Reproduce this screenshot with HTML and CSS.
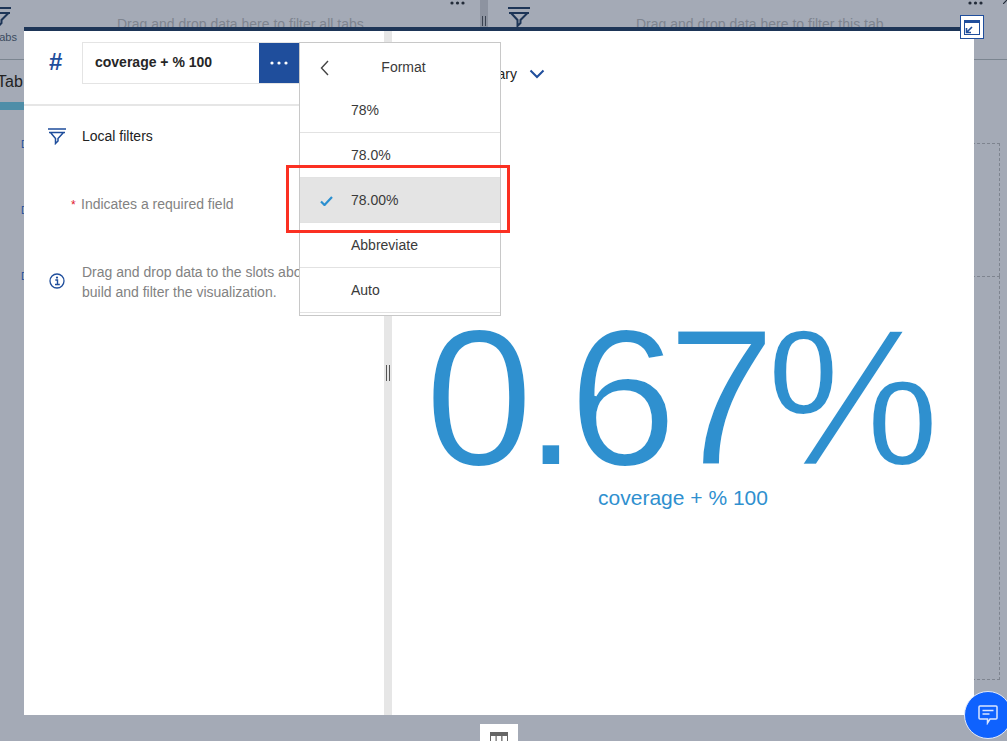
FILE: index.html
```html
<!DOCTYPE html>
<html lang="en">
<head>
    <meta charset="UTF-8">
    <meta name="viewport" content="width=device-width, initial-scale=1.0">
    <title>Visualization format</title>
    <link rel="stylesheet" href="styles.css">
</head>
<body>
    <!-- Dashboard behind the overlay -->
    <div class="board">
        <div class="board-left">
            <div class="all-tabs">
                <div class="tabs-side">
                    <svg class="funnel funnel-dark" viewBox="0 0 22 20"><path d="M0 1h22M1 6h20M3 6l6.500 7v6l3-3v-3l7-7" fill="none" stroke="#1d3557" stroke-width="2"/></svg>
                    <span class="tabs-label">abs</span>
                </div>
                <div class="drop-hint hint-all">Drag and drop data here to filter all tabs.</div>
                <svg class="dots" viewBox="0 0 15 4"><circle cx="2" cy="2" r="1.600"/><circle cx="7.500" cy="2" r="1.600"/><circle cx="13" cy="2" r="1.600"/></svg>
            </div>
            <div class="tab-title">Tab</div>
            <div class="tab-bar"></div>
            <div class="tab-marks">
                <span>D</span>
                <span>D</span>
                <span>D</span>
            </div>
        </div>
        <div class="board-split"><span class="grip"></span></div>
        <div class="board-right">
            <div class="this-tab">
                <svg class="funnel funnel-dark" viewBox="0 0 22 20"><path d="M0 1h22M1 6h20M3 6l6.500 7v6l3-3v-3l7-7" fill="none" stroke="#1d3557" stroke-width="2"/></svg>
                <div class="drop-hint hint-this">Drag and drop data here to filter this tab.</div>
                <svg class="dots" viewBox="0 0 15 4"><circle cx="2" cy="2" r="1.600"/><circle cx="7.500" cy="2" r="1.600"/><circle cx="13" cy="2" r="1.600"/></svg>
                <svg class="corner-mark" viewBox="0 0 4 4"><path d="M0 4l4-4" stroke="#222b38" stroke-width="1.200"/></svg>
            </div>
            <div class="slot slot-top"></div>
            <div class="slot slot-bottom"></div>
        </div>
    </div>

    <!-- Focused visualization -->
    <div class="modal">
        <div class="panel">
            <div class="slot-row">
                <span class="hash">#</span>
                <div class="field">
                    <span class="field-name">coverage + % 100</span>
                    <button class="field-more" type="button">
                        <svg viewBox="0 0 18 4"><circle cx="2" cy="2" r="1.600"/><circle cx="9" cy="2" r="1.600"/><circle cx="16" cy="2" r="1.600"/></svg>
                    </button>
                </div>
            </div>
            <div class="filter-row">
                <svg class="funnel funnel-blue" viewBox="0 0 18 17"><path d="M0 1h18M1 4.500h16M2.500 4.500l5 6v5l2.500-2.500v-2.500l5.500-6" fill="none" stroke="#1f4e9c" stroke-width="1.500"/></svg>
                <span>Local filters</span>
            </div>
            <div class="required"><i>*</i>Indicates a required field</div>
            <div class="info">
                <svg class="info-icon" viewBox="0 0 16 16"><circle cx="8" cy="8" r="7" fill="none" stroke="#1f4e9c" stroke-width="1.300"/><path d="M6.300 7h2.200v4.500M6 11.500h4.800" fill="none" stroke="#1f4e9c" stroke-width="1.400"/><circle cx="8" cy="4.600" r="1.100" fill="#1f4e9c"/></svg>
                <p>Drag and drop data to the slots above to build and filter the visualization.</p>
            </div>
        </div>
        <div class="splitter"><span class="grip grip-light"></span></div>
        <div class="viz">
            <div class="viz-title">
                <span>Summary</span>
                <svg class="chevron" viewBox="0 0 16 10"><path d="M1.500 1.500L8 8l6.500-6.500" fill="none" stroke="#1f4e9c" stroke-width="2"/></svg>
            </div>
            <div class="summary">
                <div class="big-value">0.67%</div>
                <div class="big-label">coverage + % 100</div>
            </div>
        </div>
    </div>

    <!-- Format menu -->
    <div class="menu">
        <div class="menu-head">
            <svg class="back" viewBox="0 0 9 16"><path d="M8 1L1.500 8 8 15" fill="none" stroke="#444" stroke-width="1.400"/></svg>
            <span>Format</span>
        </div>
        <div class="menu-item">78%</div>
        <div class="menu-item">78.0%</div>
        <div class="menu-item selected">
            <svg class="check" viewBox="0 0 13 10"><path d="M1 5.500l3.500 3.500 7.500-8" fill="none" stroke="#2a8fd0" stroke-width="2.200"/></svg>
            78.00%
        </div>
        <div class="menu-item">Abbreviate</div>
        <div class="menu-item">Auto</div>
    </div>

    <div class="highlight"></div>

    <button class="restore" type="button">
        <svg viewBox="0 0 16 15"><rect x=".5" y=".5" width="15" height="14" fill="#fff" stroke="#1f4e9c"/><rect width="16" height="3" fill="#1f4e9c"/><path d="M2.500 12.500L8 7M2.500 8v4.500H7" fill="none" stroke="#1f4e9c" stroke-width="1.600"/></svg>
    </button>

    <div class="table-tab">
        <svg viewBox="0 0 18 12"><rect width="18" height="12" fill="#666"/><rect x="1" y="4" width="4.500" height="5" fill="#fff"/><rect x="6.700" y="4" width="4.500" height="5" fill="#fff"/><rect x="12.500" y="4" width="4.500" height="5" fill="#fff"/></svg>
    </div>

    <button class="chat" type="button">
        <svg viewBox="0 0 20 20"><path d="M2 1h16a1 1 0 0 1 1 1v11a1 1 0 0 1-1 1h-6l-2.500 4v-4h-7.500a1 1 0 0 1-1-1v-11a1 1 0 0 1 1-1z" fill="none" stroke="#dbe6ff" stroke-width="1.500"/><path d="M4.500 5.500h11M4.500 9h7" fill="none" stroke="#dbe6ff" stroke-width="1.500"/></svg>
    </button>
</body>
</html>
```

FILE: styles.css
```css
/* Basic Styles */
html, body {
    height: 100%;
}
body {
    margin: 0;
    overflow: hidden;
    font-family: "Liberation Sans", Arial, sans-serif;
    background: #a4aab6;
    color: #222;
}
button {
    border: none;
    padding: 0;
    font-family: inherit;
    cursor: pointer;
}
svg {
    display: block;
}

/* Board behind the modal */
.board {
    display: flex;
    height: 741px;
    overflow: hidden;
}
.board-left {
    width: 480px;
    flex: none;
}
.all-tabs {
    display: flex;
    height: 60px;
    box-sizing: border-box;
    border-bottom: 1px solid #7b8590;
}
.tabs-side {
    width: 24px;
    margin-left: -11px;
    padding-top: 7px;
}
.funnel-dark {
    width: 22px;
    height: 20px;
    flex: none;
}
.tabs-label {
    display: block;
    margin-top: 4px;
    font-size: 11px;
    color: #3b4a60;
    text-align: right;
    margin-right: -4px;
}
.drop-hint {
    font-size: 14px;
    color: #7e848f;
    line-height: 16px;
}
.hint-all {
    margin: 16px 0 0 104px;
}
.dots {
    width: 15px;
    height: 4px;
    flex: none;
    margin: 1px 15px 0 auto;
    fill: #222b38;
}
.tab-title {
    height: 42px;
    line-height: 43px;
    font-size: 16px;
    margin-left: -3px;
}
.tab-bar {
    height: 8px;
    background: #4f8ea8;
}
.tab-marks {
    display: flex;
    flex-direction: column;
    gap: 50px;
    margin: 27px 0 0 21px;
    font-size: 10px;
    line-height: 16px;
    color: #1f4e9c;
}
.board-split {
    width: 8px;
    flex: none;
    background: #8d93a0;
    display: flex;
    justify-content: center;
    padding-top: 16px;
    height: 11px;
}
.grip {
    width: 2px;
    height: 10px;
    border: solid #3a4250;
    border-width: 0 1px;
}
.board-right {
    flex: 1;
}
.this-tab {
    display: flex;
    height: 60px;
    box-sizing: border-box;
    padding: 7px 0 0 20px;
    border-bottom: 1px solid #7b8590;
}
.hint-this {
    margin: 9px 0 0 106px;
}
.this-tab .dots {
    margin: -6px 20px 0 auto;
}
.corner-mark {
    width: 4px;
    height: 4px;
    flex: none;
    margin-top: -7px;
}
.slot {
    width: 511px;
    border: dashed #7e848f;
    border-width: 1px 1px 0 0;
}
.slot-top {
    height: 132px;
    margin-top: 83px;
}
.slot-bottom {
    height: 402px;
    border-bottom-width: 1px;
}

/* Modal */
.modal {
    position: absolute;
    left: 24px;
    top: 27px;
    width: 950px;
    height: 688px;
    box-sizing: border-box;
    border-top: 4px solid #1d3557;
    background: #fff;
    display: flex;
}
.panel {
    width: 360px;
    flex: none;
}
.slot-row {
    display: flex;
    height: 75px;
    box-sizing: border-box;
    padding: 11px 0 0 25px;
    border-bottom: 2px solid #e6e6e6;
}
.hash {
    width: 33px;
    font-size: 24px;
    font-weight: bold;
    line-height: 40px;
    color: #1f4e9c;
}
.field {
    display: flex;
    width: 217px;
    height: 42px;
    box-sizing: border-box;
    border: 1px solid #e4e4e4;
    border-right: none;
    flex: none;
}
.field-name {
    flex: 1;
    padding-left: 12px;
    font-size: 14px;
    font-weight: bold;
    line-height: 39px;
    color: #262626;
}
.field-more {
    width: 40px;
    height: 40px;
    background: #1f4e9c;
    display: flex;
    align-items: center;
    justify-content: center;
}
.field-more svg {
    width: 18px;
    height: 4px;
    fill: #fff;
}
.filter-row {
    display: flex;
    align-items: center;
    gap: 16px;
    margin: 21px 0 0 24px;
    font-size: 14px;
    line-height: 18px;
}
.funnel-blue {
    width: 18px;
    height: 17px;
}
.required {
    margin: 50px 0 0 47px;
    font-size: 14px;
    line-height: 18px;
    color: #828282;
}
.required i {
    color: #e0182d;
    font-style: normal;
    font-size: 12px;
    display: inline-block;
    width: 10px;
}
.info {
    display: flex;
    gap: 17px;
    margin: 48px 0 0 25px;
}
.info-icon {
    width: 16px;
    height: 16px;
    margin-top: 11px;
}
.info p {
    margin: 0;
    width: 255px;
    font-size: 14px;
    line-height: 20px;
    color: #828282;
}
.splitter {
    width: 8px;
    flex: none;
    background: #e6e6e6;
    display: flex;
    justify-content: center;
    align-items: center;
    box-sizing: border-box;
}
.grip-light {
    border-color: #555;
    height: 16px;
}
.viz {
    flex: 1;
    min-width: 0;
}
.viz-title {
    display: flex;
    align-items: center;
    gap: 12px;
    margin: 34px 0 0 65px;
    font-size: 14px;
    line-height: 18px;
}
.chevron {
    width: 16px;
    height: 10px;
}
.summary {
    margin-top: 239px;
    text-align: center;
}
.big-value {
    font-size: 195px;
    line-height: 150px;
    letter-spacing: -9.5px;
    padding-right: 11px;
    color: #2f90cf;
    -webkit-text-stroke: 2px #fff;
}
.big-label {
    font-size: 21px;
    line-height: 24px;
    color: #2f90cf;
    margin-top: 14px;
}

/* Format menu */
.menu {
    position: absolute;
    left: 299px;
    top: 42px;
    width: 202px;
    box-sizing: border-box;
    background: #fff;
    border: 1px solid #c8c8c8;
    padding-bottom: 2px;
    font-size: 14px;
    color: #3a3a3a;
}
.menu-head {
    display: flex;
    justify-content: center;
    align-items: center;
    height: 45px;
    padding: 2px 0 0 7px;
    box-sizing: border-box;
    position: relative;
}
.back {
    position: absolute;
    left: 20px;
    top: 17px;
    width: 9px;
    height: 16px;
}
.menu-item {
    display: flex;
    align-items: center;
    height: 45px;
    box-sizing: border-box;
    padding-left: 51px;
    border-bottom: 1px solid #e2e2e2;
    position: relative;
}
.menu-item.selected {
    background: #e4e4e4;
}
.check {
    position: absolute;
    left: 20px;
    top: 18px;
    width: 13px;
    height: 10px;
}

/* Red annotation box */
.highlight {
    position: absolute;
    left: 286px;
    top: 165px;
    width: 224px;
    height: 68px;
    box-sizing: border-box;
    border: 3px solid #fb3022;
}

/* Floating buttons */
.restore {
    position: absolute;
    left: 960px;
    top: 15px;
    width: 24px;
    height: 24px;
    box-sizing: border-box;
    border: 1px solid #1f4e9c;
    background: #fff;
    display: flex;
    align-items: center;
    justify-content: center;
}
.restore svg {
    width: 16px;
    height: 15px;
}
.table-tab {
    position: absolute;
    left: 480px;
    top: 724px;
    width: 38px;
    height: 17px;
    background: #fff;
    display: flex;
    justify-content: center;
    padding-top: 8px;
    box-sizing: border-box;
}
.table-tab svg {
    width: 18px;
    height: 12px;
}
.chat {
    position: absolute;
    left: 964px;
    top: 691px;
    width: 48px;
    height: 48px;
    border-radius: 50%;
    border: 1px solid #dfe8fb;
    background: #0f62fe;
    display: flex;
    align-items: center;
    justify-content: center;
}
.chat svg {
    width: 20px;
    height: 20px;
}
```
